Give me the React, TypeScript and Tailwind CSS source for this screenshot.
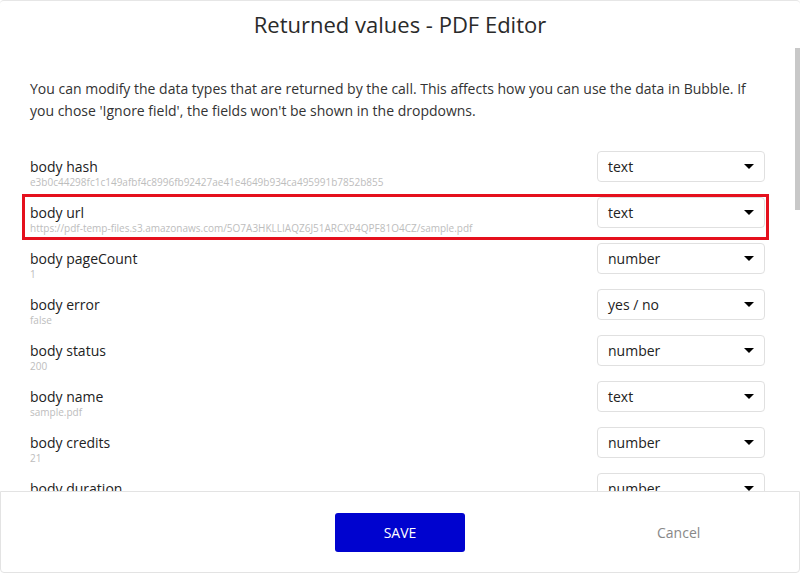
const rows = [
  { label: "body hash", sample: "e3b0c44298fc1c149afbf4c8996fb92427ae41e4649b934ca495991b7852b855", type: "text" },
  { label: "body url", sample: "https://pdf-temp-files.s3.amazonaws.com/5O7A3HKLLIAQZ6J51ARCXP4QPF81O4CZ/sample.pdf", type: "text", marked: true },
  { label: "body pageCount", sample: "1", type: "number" },
  { label: "body error", sample: "false", type: "yes / no" },
  { label: "body status", sample: "200", type: "number" },
  { label: "body name", sample: "sample.pdf", type: "text" },
  { label: "body credits", sample: "21", type: "number" },
  { label: "body duration", sample: "3", type: "number" },
];

function TypeSelect({ value }: { value: string }) {
  return (
    <button className="w-[168px] h-[31px] shrink-0 flex items-center justify-between pl-[10px] pr-[10px] border border-[#e0e0e0] rounded-[4px] bg-white text-[14px] text-[#222]">
      <span>{value}</span>
      <span className="w-0 h-0 border-x-[5px] border-x-transparent border-t-[5px] border-t-black" />
    </button>
  );
}

export default function App() {
  return (
    <div className="w-[800px] h-[573px] relative overflow-hidden bg-white text-[#333] font-['Open_Sans',sans-serif]">
      <div className="h-[491px] overflow-hidden border-t border-[#e6e6e6] rounded-t-[4px]">
        <h1 className="pt-[8px] text-center text-[22px] leading-[30px] text-[#2a2a2a]">
          Returned values - PDF Editor
        </h1>

        <p className="mt-[39px] px-[30px] pr-[45px] text-[14px] leading-[22px] text-[#333]">
          You can modify the data types that are returned by the call. This affects how you can use the data in Bubble. If
          you chose 'Ignore field', the fields won't be shown in the dropdowns.
        </p>

        <div className="mt-[29px] pl-[30px] pr-[35px]">
          {rows.map((row) => (
            <div key={row.label} className="relative h-[46px] flex justify-between items-start">
              <div className="pt-[7px]">
                <div className="text-[14px] leading-[18px] text-[#222]">{row.label}</div>
                <div className="text-[10px] leading-[12px] text-[#bdbdbd]">{row.sample}</div>
              </div>
              <TypeSelect value={row.type} />
              {row.marked && (
                <div className="absolute -left-[8px] -right-[4px] -top-[3px] h-[46px] border-[3px] border-[#e5101d] pointer-events-none" />
              )}
            </div>
          ))}
        </div>
      </div>

      {/* scrollbar thumb */}
      <div className="absolute right-0 top-[48px] w-[5px] h-[162px] bg-[#c8c8c8]" />

      <div className="h-[82px] grid grid-cols-[1fr_130px_1fr] items-center border border-[#e3e3e3] rounded-b-[4px] bg-white">
        <div />
        <button className="h-[39px] rounded-[3px] bg-[#0003cf] text-white text-[14px]">SAVE</button>
        <div className="pl-[192px]">
          <span className="text-[14px] text-[#888]">Cancel</span>
        </div>
      </div>
    </div>
  );
}
